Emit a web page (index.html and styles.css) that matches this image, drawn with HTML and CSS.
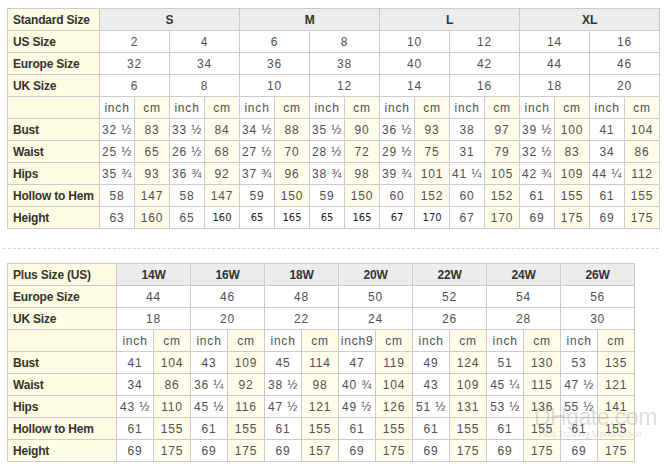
FILE: index.html
```html
<!DOCTYPE html>
<html>
<head>
<meta charset="utf-8">
<link rel="stylesheet" href="styles.css">
</head>
<body>
<div class="page">
<table class="chart std">
  <colgroup><col class="c-label"><col span="16" class="c-sub"></colgroup>
  <tr class="head"><th class="label">Standard Size</th><th colspan="4">S</th><th colspan="4">M</th><th colspan="4">L</th><th colspan="4">XL</th></tr>
  <tr><th class="label">US Size</th><td colspan="2">2</td><td colspan="2">4</td><td colspan="2">6</td><td colspan="2">8</td><td colspan="2">10</td><td colspan="2">12</td><td colspan="2">14</td><td colspan="2">16</td></tr>
  <tr><th class="label">Europe Size</th><td colspan="2">32</td><td colspan="2">34</td><td colspan="2">36</td><td colspan="2">38</td><td colspan="2">40</td><td colspan="2">42</td><td colspan="2">44</td><td colspan="2">46</td></tr>
  <tr><th class="label">UK Size</th><td colspan="2">6</td><td colspan="2">8</td><td colspan="2">10</td><td colspan="2">12</td><td colspan="2">14</td><td colspan="2">16</td><td colspan="2">18</td><td colspan="2">20</td></tr>
  <tr><th class="label"></th><td>inch</td><td class="cm">cm</td><td>inch</td><td class="cm">cm</td><td>inch</td><td class="cm">cm</td><td>inch</td><td class="cm">cm</td><td>inch</td><td class="cm">cm</td><td>inch</td><td class="cm">cm</td><td>inch</td><td class="cm">cm</td><td>inch</td><td class="cm">cm</td></tr>
  <tr><th class="label">Bust</th><td>32 ½</td><td class="cm">83</td><td>33 ½</td><td class="cm">84</td><td>34 ½</td><td class="cm">88</td><td>35 ½</td><td class="cm">90</td><td>36 ½</td><td class="cm">93</td><td>38</td><td class="cm">97</td><td>39 ½</td><td class="cm">100</td><td>41</td><td class="cm">104</td></tr>
  <tr><th class="label">Waist</th><td>25 ½</td><td class="cm">65</td><td>26 ½</td><td class="cm">68</td><td>27 ½</td><td class="cm">70</td><td>28 ½</td><td class="cm">72</td><td>29 ½</td><td class="cm">75</td><td>31</td><td class="cm">79</td><td>32 ½</td><td class="cm">83</td><td>34</td><td class="cm">86</td></tr>
  <tr><th class="label">Hips</th><td>35 ¾</td><td class="cm">93</td><td>36 ¾</td><td class="cm">92</td><td>37 ¾</td><td class="cm">96</td><td>38 ¾</td><td class="cm">98</td><td>39 ¾</td><td class="cm">101</td><td>41 ¼</td><td class="cm">105</td><td>42 ¾</td><td class="cm">109</td><td>44 ¼</td><td class="cm">112</td></tr>
  <tr><th class="label">Hollow to Hem</th><td>58</td><td class="cm">147</td><td>58</td><td class="cm">147</td><td>59</td><td class="cm">150</td><td>59</td><td class="cm">150</td><td>60</td><td class="cm">152</td><td>60</td><td class="cm">152</td><td>61</td><td class="cm">155</td><td>61</td><td class="cm">155</td></tr>
  <tr><th class="label">Height</th><td>63</td><td class="cm">160</td><td>65</td><td class="narrow">160</td><td class="narrow">65</td><td class="narrow">165</td><td class="narrow">65</td><td class="narrow">165</td><td class="narrow">67</td><td class="narrow">170</td><td>67</td><td class="cm">170</td><td>69</td><td class="cm">175</td><td>69</td><td class="cm">175</td></tr>
</table>

<div class="divider"></div>

<table class="chart plus">
  <colgroup><col class="c-label"><col span="14" class="c-sub"></colgroup>
  <tr class="head"><th class="label">Plus Size (US)</th><th colspan="2">14W</th><th colspan="2">16W</th><th colspan="2">18W</th><th colspan="2">20W</th><th colspan="2">22W</th><th colspan="2">24W</th><th colspan="2">26W</th></tr>
  <tr><th class="label">Europe Size</th><td colspan="2">44</td><td colspan="2">46</td><td colspan="2">48</td><td colspan="2">50</td><td colspan="2">52</td><td colspan="2">54</td><td colspan="2">56</td></tr>
  <tr><th class="label">UK Size</th><td colspan="2">18</td><td colspan="2">20</td><td colspan="2">22</td><td colspan="2">24</td><td colspan="2">26</td><td colspan="2">28</td><td colspan="2">30</td></tr>
  <tr><th class="label"></th><td>inch</td><td class="cm">cm</td><td>inch</td><td class="cm">cm</td><td>inch</td><td class="cm">cm</td><td>inch9</td><td class="cm">cm</td><td>inch</td><td class="cm">cm</td><td>inch</td><td class="cm">cm</td><td>inch</td><td class="cm">cm</td></tr>
  <tr><th class="label">Bust</th><td>41</td><td class="cm">104</td><td>43</td><td class="cm">109</td><td>45</td><td class="cm">114</td><td>47</td><td class="cm">119</td><td>49</td><td class="cm">124</td><td>51</td><td class="cm">130</td><td>53</td><td class="cm">135</td></tr>
  <tr><th class="label">Waist</th><td>34</td><td class="cm">86</td><td>36 ¼</td><td class="cm">92</td><td>38 ½</td><td class="cm">98</td><td>40 ¾</td><td class="cm">104</td><td>43</td><td class="cm">109</td><td>45 ¼</td><td class="cm">115</td><td>47 ½</td><td class="cm">121</td></tr>
  <tr><th class="label">Hips</th><td>43 ½</td><td class="cm">110</td><td>45 ½</td><td class="cm">116</td><td>47 ½</td><td class="cm">121</td><td>49 ½</td><td class="cm">126</td><td>51 ½</td><td class="cm">131</td><td>53 ½</td><td class="cm">136</td><td>55 ½</td><td class="cm">141</td></tr>
  <tr><th class="label">Hollow to Hem</th><td>61</td><td class="cm">155</td><td>61</td><td class="cm">155</td><td>61</td><td class="cm">155</td><td>61</td><td class="cm">155</td><td>61</td><td class="cm">155</td><td>61</td><td class="cm">155</td><td>61</td><td class="cm">155</td></tr>
  <tr><th class="label">Height</th><td>69</td><td class="cm">175</td><td>69</td><td class="cm">175</td><td>69</td><td class="cm">157</td><td>69</td><td class="cm">175</td><td>69</td><td class="cm">175</td><td>69</td><td class="cm">175</td><td>69</td><td class="cm">175</td></tr>
</table>

<div class="watermark">
  <div class="wm-brand">DHgate.com</div>
  <div class="wm-tag">Fast Trading Marketplace</div>
</div>
</div>
</body>
</html>
```

FILE: styles.css
```css
html, body {
  margin: 0;
  padding: 0;
  background: #ffffff;
}

.page {
  position: relative;
  width: 665px;
  height: 464px;
  padding: 8px 0 0 7px;
  box-sizing: border-box;
  font-family: "Liberation Sans", Arial, sans-serif;
}

.chart {
  border-collapse: collapse;
  table-layout: fixed;
}

.chart th,
.chart td {
  border: 1px solid #cbcbcb;
  height: 21px;
  padding: 0;
  overflow: hidden;
  white-space: nowrap;
}

.chart td {
  text-align: center;
  font-size: 12px;
  letter-spacing: 0.8px;
  color: #505050;
  background: #ffffff;
}

.chart td.cm {
  background: #fffdea;
}

.chart td.narrow {
  background: #ffffff;
  color: #1a1a1a;
  letter-spacing: 0;
  font-family: "DejaVu Sans Condensed", "Liberation Sans Narrow", "Liberation Sans", sans-serif;
  font-size: 11px;
}

.chart th {
  font-size: 12px;
  letter-spacing: -0.2px;
  font-weight: bold;
  color: #333333;
  text-align: center;
  background: #ececec;
}

.chart th.label {
  text-align: left;
  padding-left: 5px;
  background: #fffce3;
}

.std {
  width: 652px;
}
.std .c-label { width: 92px; }
.std .c-sub { width: 35px; }

.plus {
  width: 627px;
}
.plus .c-label { width: 109px; }
.plus .c-sub { width: 37px; }

.divider {
  margin: 19px 0 14px -4px;
  width: 656px;
  border-top: 1px dashed #d6d6d6;
}

.watermark {
  position: absolute;
  left: 534px;
  top: 406px;
  width: 112px;
  text-align: center;
  white-space: nowrap;
  color: rgba(120, 120, 120, 0.25);
  pointer-events: none;
}

.wm-brand {
  font-size: 23px;
  letter-spacing: -0.5px;
  line-height: 22px;
}

.wm-tag {
  font-size: 9px;
  line-height: 12px;
  letter-spacing: 0.1px;
}
```
